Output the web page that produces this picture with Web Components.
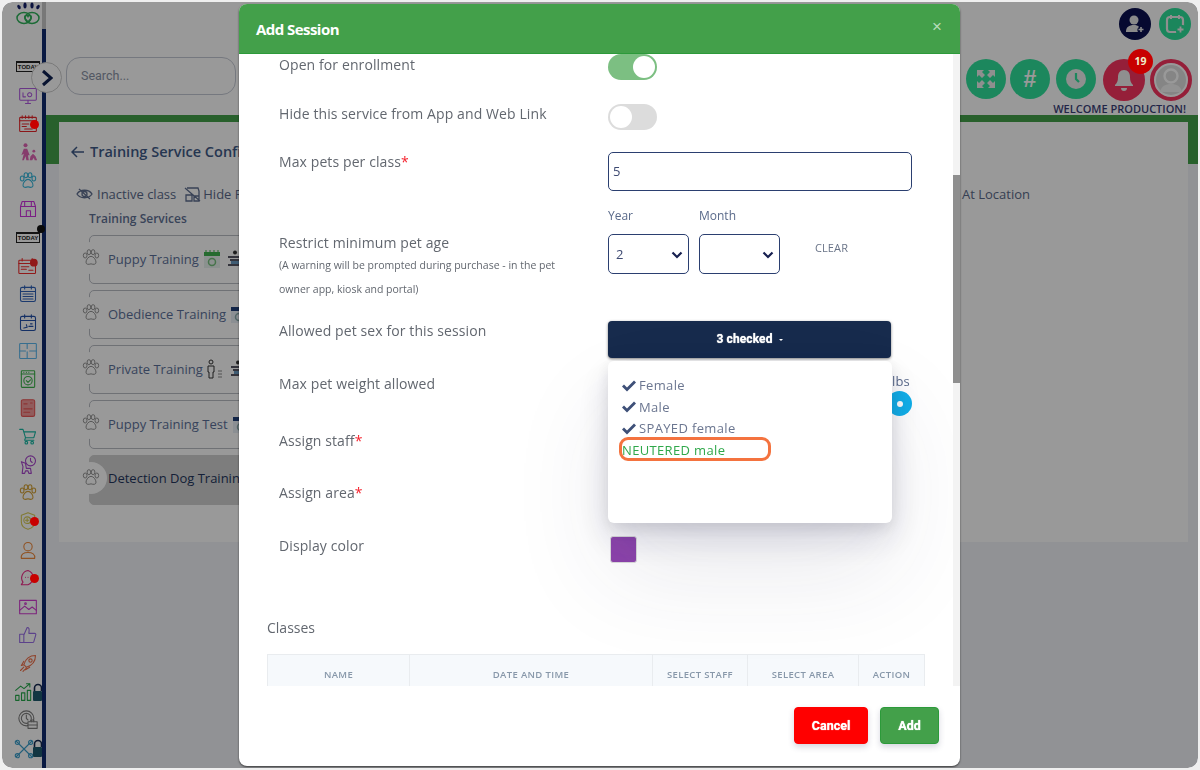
<!DOCTYPE html>
<html lang="en">
<head>
<meta charset="utf-8">
<title>Add Session</title>
<style>
  html, body { margin: 0; height: 100%; background: #efefef; font-family: "Open Sans", "Liberation Sans", sans-serif; }
</style>
</head>
<body>
<app-shell>
  <side-rail slot="rail"></side-rail>
  <top-bar slot="top"></top-bar>
  <service-panel slot="main">
    <service-row name="Puppy Training" icons="cal table"></service-row>
    <service-row name="Obedience Training" icons="navycal"></service-row>
    <service-row name="Private Training" icons="person table"></service-row>
    <service-row name="Puppy Training Test" icons="navycal"></service-row>
    <service-row name="Detection Dog Training" selected></service-row>
  </service-panel>
  <session-modal slot="modal">
    <form-row label="Open for enrollment" h="49" top="-1"><toggle-switch on></toggle-switch></form-row>
    <form-row label="Hide this service from App and Web Link" h="48"><toggle-switch></toggle-switch></form-row>
    <form-row label="Max pets per class" required h="56"><text-field value="5"></text-field></form-row>
    <age-row></age-row>
    <form-row label="Allowed pet sex for this session" h="53"><check-menu></check-menu></form-row>
    <form-row label="Max pet weight allowed" h="57"><weight-unit></weight-unit></form-row>
    <form-row label="Assign staff" required h="52"></form-row>
    <form-row label="Assign area" required h="53"></form-row>
    <form-row label="Display color" h="82"><color-swatch></color-swatch></form-row>
    <classes-table></classes-table>
  </session-modal>
</app-shell>

<script>
const pawPath = `<ellipse cx="5" cy="9" rx="2.2" ry="3"/><ellipse cx="9.5" cy="5" rx="2.2" ry="3"/><ellipse cx="14.5" cy="5" rx="2.2" ry="3"/><ellipse cx="19" cy="9" rx="2.2" ry="3"/><path d="M12 10c-3 0-6 4-6 7 0 3 3 3 6 2 3 1 6 1 6-2 0-3-3-7-6-7z"/>`;

const railIcons = [
  { y: 'today' },
  { c: '#b05be0', d: `<rect x="2" y="3" width="20" height="14" rx="1"/><path d="M9 21h6M12 17v4M6 8v5h3M14 8a2.5 2.5 0 1 0 .01 0"/>` },
  { c: '#e8262a', d: `<rect x="2" y="4" width="20" height="17" rx="1"/><path d="M2 8h20M5 2v3M9 2v3M13 2v3M17 2v3M5 12h8M5 15h5M8 18h9"/>`, dot: 1 },
  { c: '#e065b5', fill: 1, d: `<circle cx="9" cy="4" r="2.4"/><path d="M5 22l2-8-3 2 3-8h4l3 8-2 0 1 6h-3l-1-5-2 5z"/><circle cx="19" cy="11" r="1.7"/><path d="M14 22l1-5 3-3 3 3 2 5h-3l-1-3-2 3z"/>` },
  { c: '#39b8dc', d: pawPath },
  { c: '#cc33dd', d: `<path d="M3 9l2-6h14l2 6M3 9v12h18V9M3 9h18M8 3v6M16 3v6M10 21v-7h5v7"/>` },
  { y: 'today', ball: 1 },
  { c: '#f22c2c', d: `<rect x="1" y="5" width="20" height="16" rx="1"/><path d="M1 9h20M5 3v3M17 3v3M4 13h9M4 16h6M13 17h5"/><circle cx="19" cy="8" r="4" fill="#f22c2c"/>` },
  { c: '#2f62b8', d: `<rect x="3" y="4" width="18" height="17" rx="2"/><path d="M3 9h18M8 2v4M16 2v4M6 12h12M6 15h12M6 18h12"/>` },
  { c: '#2350a8', d: `<rect x="3" y="4" width="18" height="17" rx="2"/><path d="M3 9h18M8 2v4M16 2v4M7 18l4-1-1-3M13 16h5M15 13h2"/>` },
  { c: '#5cb8ee', d: `<rect x="2" y="3" width="20" height="18" rx="1"/><path d="M11 3v6M11 13v8M2 12h7M14 12h8"/>` },
  { c: '#3bb34a', d: `<rect x="4" y="2" width="16" height="20" rx="1"/><path d="M4 6h16M7 4h.1M10 4h.1M13 4h.1"/><circle cx="12" cy="14" r="5"/><path d="M10 14l2 2 3-3"/>` },
  { c: '#ea5656', d: `<rect x="4" y="2" width="16" height="20" rx="2" fill="#f29a9a"/><path d="M7 7h4M15 6h2M7 13h10M7 17h7"/>` },
  { c: '#17b8a4', d: `<path d="M2 4h4l3 10h10l2-7H7M9 14l-1 3h11"/><circle cx="10" cy="20" r="1.6"/><circle cx="17" cy="20" r="1.6"/>` },
  { c: '#a845cc', d: `<circle cx="15" cy="7" r="6"/><path d="M15 4v3l2 2M4 8l5 2 1 6h5l1 6h-3l-1-3H9l-1 3H5l1-8z"/>` },
  { c: '#d5a43a', d: pawPath },
  { c: '#d8cc55', d: `<path d="M12 2l8 3v8c0 5-4 8-8 9-4-1-8-4-8-9V5z"/><circle cx="11" cy="11" r="4"/><path d="M11 9v4M9 11h4"/>`, dot: 1 },
  { c: '#f08a3c', d: `<circle cx="12" cy="8" r="5"/><path d="M4 22c-1-5 3-7 8-7s9 2 8 7z"/>` },
  { c: '#ee2a86', d: `<path d="M12 3a9 9 0 0 1 0 17H4l2-3a9 9 0 0 1 6-14zM9 11h.1M12 11h.1"/>`, dot: 1 },
  { c: '#d03bd0', d: `<rect x="2" y="4" width="20" height="16"/><path d="M2 16l6-5 5 4 4-3 5 4"/><circle cx="9" cy="8" r="1"/>` },
  { c: '#9a6fe8', d: `<path d="M2 11h5v10H2zM7 12l4-9c2 0 3 1 2 7h7c1 0 2 1 1 3l-2 7c0 1-1 1-2 1H7"/>` },
  { c: '#f0704a', d: `<path d="M21 3c-7 0-12 4-14 11l3 3c7-2 11-7 11-14zM7 14l-3 1 3-5M10 17l-1 3 5-3M3 21l4-4M6 22l2-2"/><circle cx="15" cy="9" r="2"/>` },
  { c: '#25a84a', lock: 1, shift: 9, d: `<rect x="2" y="16" width="4" height="6"/><rect x="9" y="13" width="4" height="9"/><rect x="16" y="10" width="4" height="12"/><path d="M2 10l6-5 4 3 7-6M15 2h4v4"/>` },
  { c: '#7d7d7d', shift: 0, d: `<circle cx="10" cy="10" r="9"/><circle cx="10" cy="10" r="6"/><path d="M10 6v4l2 2"/><rect x="12" y="14" width="11" height="8" fill="#fff"/><path d="M16 14v-2h3v2M12 18h11"/>` },
  { c: '#3a9ecb', lock: 1, shift: 9, d: `<path d="M3 3l18 18M21 3L3 21"/><circle cx="4" cy="4" r="2.5"/><circle cx="20" cy="20" r="2.5"/><circle cx="20" cy="4" r="2.5"/><circle cx="4" cy="20" r="2.5"/>` },
];

class UiPart extends HTMLElement {
  connectedCallback() {
    if (this.shadowRoot) return;
    const root = this.attachShadow({ mode: 'open' });
    root.innerHTML = `<style>${this.constructor.css}</style>${this.markup()}`;
  }
}

class AppShell extends UiPart {
  static css = `
    :host { display: block; height: 100vh; padding: 2px; box-sizing: border-box; }
    .frame { position: relative; height: 766px; border-radius: 10px; overflow: hidden; background: #f2f3f9;
      display: grid; grid-template-columns: 44px 1fr; grid-template-rows: 113px 1fr; }
    .rail { grid-row: 1 / 3; }
    .dim { position: absolute; inset: 0; background: rgba(0,0,0,.4); z-index: 5; backdrop-filter: blur(.6px); }
  `;
  markup() {
    return `<div class="frame">
      <div class="rail"><slot name="rail"></slot></div>
      <slot name="top"></slot>
      <slot name="main"></slot>
      <div class="dim"></div>
      <slot name="modal"></slot>
    </div>`;
  }
}

class SideRail extends UiPart {
  static css = `
    :host { display: flex; height: 766px; background: #fff; position: relative; }
    .items { width: 40px; box-sizing: border-box; padding: 51px 0 0 12px; }
    .bar { width: 4px; background: linear-gradient(#c8c8c8 27px, #0f2a6e 27px); }
    .logo { position: absolute; left: 13px; top: 0; }
    .it { position: relative; height: 28.4px; display: flex; align-items: center; justify-content: center; }
    svg.ic { width: 20px; height: 20px; fill: none; stroke-width: 1.3; stroke-linecap: round; stroke-linejoin: round; flex: none; }
    .today { font: 700 6px/8px "Liberation Sans", sans-serif; color: #222; border: 1px solid #222; padding: 0 1px; box-shadow: 0 -1px 0 #222; }
    .ball { position: absolute; right: -3px; top: 2px; width: 8px; height: 8px; border-radius: 50%; background: #111; }
    .dot { position: absolute; left: 16px; top: 10px; width: 9px; height: 9px; border-radius: 50%; background: #c80000; z-index: 6; }
    .lock { position: absolute; left: 19px; top: 5px; width: 9px; height: 18px; }
  `;
  markup() {
    const items = railIcons.map(i => {
      if (i.y) {
        return `<div class="it"><span class="today">TODAY</span>${i.ball ? '<i class="ball"></i>' : ''}</div>`;
      }
      const paint = i.fill ? `style="fill:${i.c};stroke:none;margin-right:${i.shift || 0}px"` : `stroke="${i.c}" style="margin-right:${i.shift || 0}px"`;
      return `<div class="it">
        <svg class="ic" viewBox="0 0 24 24" ${paint}>${i.d}</svg>
        ${i.dot ? '<i class="dot"></i>' : ''}
        ${i.lock ? `<svg class="lock" viewBox="0 0 9 18"><path d="M1.5 8V5a3.5 3.5 0 0 1 7 0v3" fill="none" stroke="#14284f" stroke-width="1.6"/><rect x="0" y="8" width="9" height="10" rx="1" fill="#1f5a6e"/></svg>` : ''}
      </div>`;
    }).join('');
    return `
      <svg class="logo" width="30" height="25" viewBox="0 0 30 25">
        <g fill="#14206a"><ellipse cx="4" cy="5" rx="1.5" ry="2.4" transform="rotate(-30 4 5)"/><ellipse cx="10" cy="3.500" rx="1.6" ry="3"/><ellipse cx="17" cy="3.500" rx="1.6" ry="3"/><ellipse cx="23" cy="5" rx="1.5" ry="2.4" transform="rotate(30 23 5)"/></g>
        <g fill="none" stroke="#2fb25a" stroke-width="1.5"><ellipse cx="9" cy="16" rx="7" ry="5.500"/><ellipse cx="17" cy="16" rx="7" ry="5.500"/><path d="M13 20l-3-3.500c-1-3 2-4 3-2 1-2 4-1 3 2z"/></g>
      </svg>
      <div class="items">${items}</div><div class="bar"></div>`;
  }
}

class TopBar extends UiPart {
  static css = `
    :host { display: flex; justify-content: space-between; align-items: flex-start; background: #fff; padding: 6px 7px 0 20px; font-family: "Open Sans", sans-serif; min-width: 0; }
    .search { margin-top: 49px; width: 170px; height: 38px; box-sizing: border-box; border: 1px solid #c4c9d4; border-radius: 14px; padding: 0 0 2px 14px;
      display: flex; align-items: center; font-size: 12.5px; color: #8a93a6; font-family: Roboto, sans-serif; }
    .chev { position: absolute; left: 29px; top: 60px; width: 29px; height: 29px; border-radius: 50%; background: #fff; border: 1px solid #ccc;
      display: flex; align-items: center; justify-content: center; }
    .acts { display: flex; flex-direction: column; align-items: flex-end; }
    .row { display: flex; }
    .c { border-radius: 50%; display: flex; align-items: center; justify-content: center; flex: none; position: relative; background: #30e29c; color: #fff; }
    .small { width: 32px; height: 32px; margin-left: 8px; }
    .big { width: 40px; height: 40px; }
    .two { margin-top: 19px; margin-right: -1px; }
    .red { background: #f8345f; width: 42px; height: 42px; }
    .hash { font: 700 23px/1 "Liberation Sans", sans-serif; }
    .badge { position: absolute; left: 25px; top: -10px; width: 25px; height: 25px; border-radius: 50%; background: #c80000; color: #eec; font: 700 10.5px/25px "Open Sans", sans-serif; text-align: center; z-index: 6; }
    .me { width: 42px; height: 42px; box-sizing: border-box; border: 4px solid #f8345f; background: #fff; margin-left: 5px; overflow: hidden; }
    .me i { width: 30px; height: 30px; border-radius: 50%; background: #dedede; display: flex; align-items: center; justify-content: center; }
    .hi { font-size: 11px; font-weight: 600; line-height: 14px; color: #3a3f78; margin: 1px 5px 0 0; white-space: nowrap; }
  `;
  markup() {
    return `
      <div class="chev"><svg width="14" height="18" viewBox="0 0 14 18"><path d="M3 2l8 7-8 7" fill="none" stroke="#0e2050" stroke-width="3"/></svg></div>
      <div class="search">Search...</div>
      <div class="acts">
        <div class="row">
          <div class="c small" style="background:#0a1050"><svg width="20" height="20" viewBox="0 0 20 20" fill="#e6e6e6"><circle cx="9" cy="6" r="4.5"/><path d="M1 18c0-5 3-7 8-7 2 0 4 .5 5 2-2 1-2 4-1 5z"/><path d="M16 13v5M13.5 15.5h5" stroke="#e6e6e6" stroke-width="1.6"/></svg></div>
          <div class="c small" style="background:#2de099"><svg width="20" height="20" viewBox="0 0 20 20"><rect x="2" y="3" width="16" height="15" rx="3" fill="none" stroke="#eee" stroke-width="2.2"/><path d="M6 1v4M14 1v4" stroke="#eee" stroke-width="2"/><rect x="11" y="11" width="9" height="9" rx="2" fill="#2de099"/><path d="M15.500 12.500v6M12.500 15.500h6" stroke="#eee" stroke-width="1.800"/></svg></div>
        </div>
        <div class="row two">
          <div class="c big"><svg width="20" height="20" viewBox="0 0 20 20" fill="#eee"><path d="M1 1h7L6 3l3 3-3 3-3-3-2 2zM19 1v7l-2-2-3 3-3-3 3-3-2-2zM1 19v-7l2 2 3-3 3 3-3 3 2 2zM19 19h-7l2-2-3-3 3-3 3 3 2-2z"/></svg></div>
          <div class="c big" style="margin-left:4px"><span class="hash">#</span></div>
          <div class="c big" style="margin-left:6px"><svg width="22" height="22" viewBox="0 0 22 22"><circle cx="11" cy="11" r="10" fill="#eee"/><path d="M11 5v6l3 3" fill="none" stroke="#30e29c" stroke-width="2.200"/></svg></div>
          <div class="c red" style="margin-left:7px"><svg width="22" height="24" viewBox="0 0 22 24" fill="#eee"><path d="M11 2c-4 0-6 3-6 7 0 4-1 6-3 8v1h18v-1c-2-2-3-4-3-8 0-4-2-7-6-7zM8 20a3 3 0 0 0 6 0z"/></svg><span class="badge">19</span></div>
          <div class="c me"><i><svg width="30" height="30" viewBox="0 0 30 30"><circle cx="15" cy="11" r="6.500" fill="none" stroke="#fff" stroke-width="2.400"/><path d="M4 27c1-6 6-8 11-8s10 2 11 8" fill="#f4f4f4"/></svg></i></div>
        </div>
        <div class="hi">WELCOME PRODUCTION!</div>
      </div>`;
  }
}

class ServicePanel extends UiPart {
  static css = `
    :host { display: block; padding: 7px 10px 0 13px; background: linear-gradient(#43a04a, #43a04a) top / 100% 49px no-repeat; font-family: "Open Sans", sans-serif; }
    .card { background: #fff; height: 420px; box-sizing: border-box; padding: 19px 0 0 17px; color: #5a6a8a; }
    h2 { margin: 0 0 0 -5px; font-size: 14.5px; line-height: 22px; font-weight: 600; color: #3f5b88; display: flex; align-items: center; gap: 5px; }
    .legend { display: flex; align-items: center; margin: 21px 158px 0 0; font-size: 13px; line-height: 20px; gap: 4px; }
    .legend .at { margin-left: auto; }
    .legend svg { fill: none; stroke: #5f6f90; stroke-width: 1.300; }
    .sub { margin: 7px 0 8px 13px; font-size: 12px; font-weight: 600; line-height: 16px; color: #5f7295; }
    .list { display: flex; flex-direction: column; gap: 6px; margin-left: 13px; width: 400px; }
  `;
  markup() {
    return `<div class="card">
      <h2><svg width="14" height="12" viewBox="0 0 14 12"><path d="M13 6H2M6 1L1 6l5 5" fill="none" stroke="#3f5b88" stroke-width="1.500"/></svg>Training Service Config</h2>
      <div class="legend">
        <svg width="17" height="14" viewBox="0 0 17 14"><path d="M1 7c3-5 12-5 15 0-3 5-12 5-15 0zM3 2l11 10"/><circle cx="8.500" cy="7" r="2.500"/></svg>
        <span>Inactive class</span>
        <svg style="margin-left:4px" width="17" height="18" viewBox="0 0 17 18"><path d="M1 3l15 13M3 3h11l1 3v8M2 10h6v6H2zM10 11h5v5h-5z"/></svg>
        <span style="margin-left:-2px">Hide From App</span>
        <span class="at">At Location</span>
      </div>
      <div class="sub">Training Services</div>
      <div class="list"><slot></slot></div>
    </div>`;
  }
}

class ServiceRow extends UiPart {
  static css = `
    :host { display: block; position: relative; height: 49px; box-sizing: border-box; border: 1px solid #b9bcc4; border-radius: 5px; }
    :host([selected]) { background: #d0d0d0; border-color: #d0d0d0; height: 50px; }
    .paw { position: absolute; left: -15px; top: 6px; width: 32px; height: 32px; border-radius: 50%; background: #fff; display: flex; align-items: center; justify-content: center; }
    .paw svg { width: 20px; height: 20px; fill: none; stroke: #8a8a8a; stroke-width: 1.100; }
    .row { display: flex; align-items: center; height: 20px; margin: 13px 0 0 18px; font-size: 13px; color: #5c7199; gap: 3px; }
    :host([selected]) .row { color: #23355c; margin-top: 12px; }
    svg.i { flex: none; }
  `;
  markup() {
    const icons = {
      cal: `<svg class="i" width="18" height="18" viewBox="0 0 18 18" style="margin-left:1px"><rect x="1" y="4" width="16" height="14" fill="#e8f2ee"/><rect x="1" y="2" width="16" height="4" fill="#3fb34f"/><path d="M3 0v3M7 0v3M11 0v3M15 0v3" stroke="#3fb34f"/><circle cx="9" cy="12" r="3.500" fill="none" stroke="#75c07d" stroke-width="1.500"/></svg>`,
      navycal: `<svg class="i" width="18" height="18" viewBox="0 0 18 18" style="margin-left:1px"><rect x="1" y="4" width="16" height="14" fill="#e8eef5"/><rect x="1" y="2" width="16" height="4" fill="#1f3f78"/><circle cx="9" cy="12" r="3.500" fill="none" stroke="#8aa" stroke-width="1.500"/></svg>`,
      table: `<svg class="i" width="16" height="18" viewBox="0 0 16 18" style="margin-left:3px"><circle cx="8" cy="2.500" r="2" fill="#333"/><path d="M1 7h14M3 10h10M1 15h14" stroke="#223" stroke-width="1.600"/><rect x="4" y="11" width="8" height="3" fill="#6a9ac0"/></svg>`,
      person: `<svg class="i" width="18" height="20" viewBox="0 0 18 20" fill="none" stroke="#333"><circle cx="5" cy="3" r="2"/><path d="M2 7h6v6H7v6H3v-6H2z"/><path d="M12 12h4M12 15h4M12 18h4" stroke="#888"/></svg>`,
    };
    const extra = (this.getAttribute('icons') || '').split(' ').filter(Boolean).map(k => icons[k]).join('');
    return `<div class="paw"><svg viewBox="0 0 24 24">${pawPath}</svg></div>
      <div class="row"><span>${this.getAttribute('name')}</span>${extra}</div>`;
  }
}

class SessionModal extends UiPart {
  static css = `
    :host { position: absolute; z-index: 10; left: 237px; top: 2px; width: 721px; height: 762px; background: #fff; border-radius: 8px; overflow: hidden;
      display: flex; flex-direction: column; box-shadow: 0 1px 2px rgba(0,0,0,.6); font-family: "Open Sans", sans-serif; }
    header { height: 50px; flex: none; box-sizing: border-box; background: #43a04a; border-bottom: 1px solid #2c9a3a; display: flex; align-items: center; justify-content: space-between; padding: 0 18px 0 17px; color: #fff; }
    h1 { margin: 0; font-size: 15px; font-weight: 700; letter-spacing: -.55px; }
    .x { color: #b7dcba; font-size: 17px; font-weight: 400; font-family: "Liberation Sans", sans-serif; margin-bottom: 3px; }
    .mid { flex: 1; display: flex; min-height: 0; }
    .body { flex: 1; min-width: 0; overflow: hidden; padding-top: 1px; }
    .scroll { width: 7px; flex: none; background: #f3f3f3; }
    .scroll i { display: block; height: 208px; margin-top: 121px; background: #8f8f8f; }
    footer { height: 80px; flex: none; display: flex; justify-content: flex-end; align-items: flex-start; gap: 12px; padding: 21px 21px 0 0; box-sizing: border-box; }
    button { height: 37px; border: 1px solid; border-radius: 4px; color: #fff; font: 700 12.500px Roboto, sans-serif; box-shadow: 0 3px 6px rgba(50,50,93,.2); text-shadow: 0 0 1px #fff; }
    .cancel { width: 74px; background: #ff0000; border-color: #ff0000; }
    .add { width: 59px; background: #43a04a; border-color: #2c9a3a; }
  `;
  markup() {
    return `<header><h1>Add Session</h1><span class="x">×</span></header>
      <div class="mid"><div class="body"><slot></slot></div><div class="scroll"><i></i></div></div>
      <footer><button class="cancel">Cancel</button><button class="add">Add</button></footer>`;
  }
}

class FormRow extends UiPart {
  static css = `
    :host { display: grid; grid-template-columns: 329px 1fr; padding-left: 40px; box-sizing: border-box; color: #62676f; font-size: 14px; line-height: 20px; letter-spacing: .1px; }
    b { color: #f5222d; font-weight: 400; }
  `;
  markup() {
    this.style.height = this.getAttribute('h') + 'px';
    const top = this.getAttribute('top') || 0;
    return `<div>${this.getAttribute('label')}${this.hasAttribute('required') ? '<b>*</b>' : ''}</div>
      <div style="margin-top:${top}px"><slot></slot></div>`;
  }
}

class ToggleSwitch extends UiPart {
  static css = `
    :host { display: block; width: 49px; height: 26px; border-radius: 13px; background: #dcdcdc; position: relative; }
    :host([on]) { background: #7cbf82; }
    i { position: absolute; top: 2px; left: 2px; width: 22px; height: 22px; border-radius: 50%; background: #fff; }
    :host([on]) i { left: 25px; }
  `;
  markup() { return '<i></i>'; }
}

class TextField extends UiPart {
  static css = `
    :host { display: block; width: 304px; height: 39px; box-sizing: border-box; border: 1px solid #2b3f70; border-radius: 5px; padding-left: 4px; font: 13px/36px "Open Sans", sans-serif; color: #3e4a72; }
  `;
  markup() { return this.getAttribute('value'); }
}

class AgeRow extends UiPart {
  static css = `
    :host { display: grid; grid-template-columns: 329px 1fr; padding-left: 40px; height: 113px; color: #62676f; font-size: 14px; line-height: 20px; letter-spacing: .1px; }
    .lab { padding-top: 25px; }
    small { display: block; font-size: 10.500px; line-height: 24px; width: 290px; letter-spacing: 0; }
    .ctl { display: flex; }
    .f { margin-right: 10px; }
    .f span { display: block; font-size: 12px; line-height: 16px; margin-bottom: 10px; color: #5a6a8a; letter-spacing: 0; }
    .sel { position: relative; width: 81px; }
    select { display: block; appearance: none; width: 81px; height: 40px; box-sizing: border-box; background: #fff; border: 1px solid #2b3f70; border-radius: 5px; font: 13px "Open Sans", sans-serif; color: #3e4a72; padding-left: 7px; }
    .sel svg { position: absolute; right: 6px; top: 17px; pointer-events: none; }
    .clear { margin: 32px 0 0 25px; font-size: 11px; line-height: 16px; color: #6a7488; }
  `;
  markup() {
    const chevron = '<svg width="12" height="8" viewBox="0 0 12 8"><path d="M1.500 1.500L6 6l4.500-4.500" fill="none" stroke="#172050" stroke-width="2.200"/></svg>';
    return `<div class="lab">Restrict minimum pet age
        <small>(A warning will be prompted during purchase - in the pet owner app, kiosk and portal)</small></div>
      <div class="ctl">
        <div class="f"><span>Year</span><div class="sel"><select><option>2</option></select>${chevron}</div></div>
        <div class="f"><span>Month</span><div class="sel"><select><option></option></select>${chevron}</div></div>
        <div class="clear">CLEAR</div>
      </div>`;
  }
}

class CheckMenu extends UiPart {
  static css = `
    :host { display: block; position: relative; width: 283px; font-family: "Open Sans", sans-serif; }
    .btn { height: 37px; background: #172b4d; border-radius: 4px; box-shadow: 0 1px 3px rgba(0,0,0,.5); color: #fff; font: 700 12px/37px Roboto, sans-serif; text-shadow: 0 0 1px #fff; display: flex; align-items: center; justify-content: center; gap: 6px; }
    .btn i { width: 0; height: 0; border: 2.500px solid transparent; border-top-color: #fff; border-bottom: 0; }
    .menu { position: absolute; z-index: 3; left: 0; top: 40px; width: 284px; height: 162px; box-sizing: border-box; padding: 14px 0 0 14px; background: #fff; border-radius: 6px;
      box-shadow: 0 50px 100px rgba(50,50,93,.1), 0 15px 35px rgba(50,50,93,.15), 0 5px 15px rgba(0,0,0,.1); font-size: 13px; line-height: 21.500px; color: #6b7690; letter-spacing: .35px; }
    .it { display: flex; align-items: center; gap: 3px; }
    svg { width: 14px; height: 12px; fill: #3e5078; flex: none; }
    .free { color: #2fa84a; }
    .mark { position: absolute; left: 11px; top: 76px; width: 152px; height: 24px; box-sizing: border-box; border: 3px solid #f4733f; border-radius: 9px; }
  `;
  markup() {
    const tick = '<svg viewBox="0 0 14 12"><path d="M0 6.500l2-2 3 3L12 .500l2 2-9 9z"/></svg>';
    return `<div class="btn">3 checked<i></i></div>
      <div class="menu">
        <div class="it">${tick}Female</div>
        <div class="it">${tick}Male</div>
        <div class="it">${tick}SPAYED female</div>
        <div class="it free">NEUTERED male</div>
        <i class="mark"></i>
      </div>`;
  }
}

class WeightUnit extends UiPart {
  static css = `
    :host { display: flex; flex-direction: column; align-items: flex-start; margin-left: 284px; margin-top: -1px; font-size: 13px; line-height: 16px; color: #5a6a8a; width: 30px; }
    i { width: 25px; height: 25px; border-radius: 50%; background: #11b0ea; display: flex; align-items: center; justify-content: center; margin: 2px 0 0 -5px; }
    i::after { content: ""; width: 6px; height: 6px; border-radius: 50%; background: #fff; }
  `;
  markup() { return '<span>lbs</span><i></i>'; }
}

class ColorSwatch extends UiPart {
  static css = `:host { display: block; width: 27px; height: 27px; margin-left: 2px; background: #8e44ad; border: 1px solid #ddd; box-sizing: border-box; border-radius: 3px; }`;
  markup() { return ''; }
}

class ClassesTable extends UiPart {
  static css = `
    :host { display: block; margin-left: 28px; width: 657px; font-family: "Open Sans", sans-serif; color: #62676f; }
    .t { font-size: 14px; line-height: 20px; margin-bottom: 16px; }
    table { width: 657px; border-collapse: collapse; table-layout: fixed; }
    th { height: 38px; background: #f6f9fc; border: 1px solid #e9ecef; border-bottom: 0; font-size: 9.500px; font-weight: 600; letter-spacing: .35px; color: #8898aa; padding: 0; }
  `;
  markup() {
    return `<div class="t">Classes</div>
      <table><colgroup><col style="width:142px"><col style="width:243px"><col style="width:95px"><col style="width:111px"><col style="width:66px"></colgroup>
      <tr><th>NAME</th><th>DATE AND TIME</th><th>SELECT STAFF</th><th>SELECT AREA</th><th>ACTION</th></tr></table>`;
  }
}

const parts = { 'app-shell': AppShell, 'side-rail': SideRail, 'top-bar': TopBar, 'service-panel': ServicePanel,
  'service-row': ServiceRow, 'session-modal': SessionModal, 'form-row': FormRow, 'toggle-switch': ToggleSwitch,
  'text-field': TextField, 'age-row': AgeRow, 'check-menu': CheckMenu, 'weight-unit': WeightUnit,
  'color-swatch': ColorSwatch, 'classes-table': ClassesTable };
Object.keys(parts).forEach(name => customElements.define(name, parts[name]));
</script>
</body>
</html>
